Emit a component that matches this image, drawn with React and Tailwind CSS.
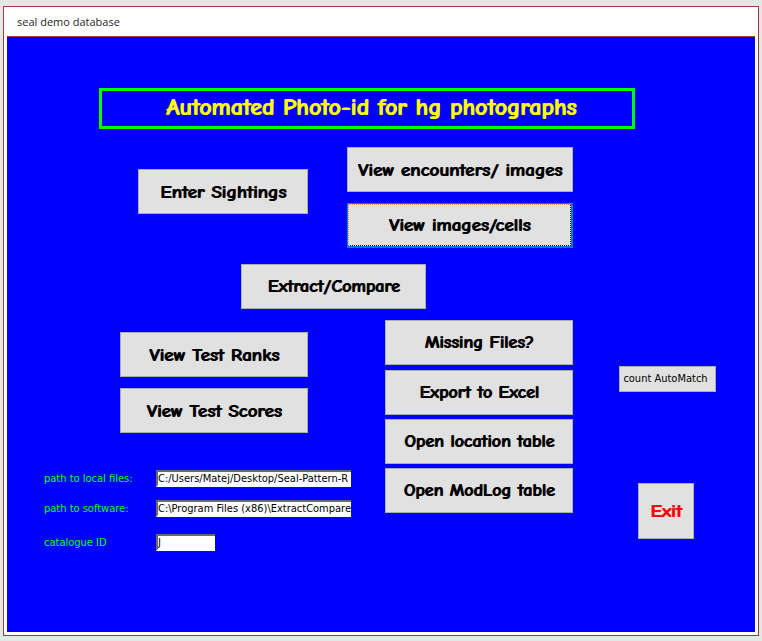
const comic = 'font-["Comic_Sans_MS","Comic_Neue",Lato,sans-serif] font-bold [text-shadow:1px_0_0_currentColor]';
const tahoma = 'font-["DejaVu_Sans_Condensed","Noto_Sans",sans-serif]';

function MenuButton({ className = '', size = 'text-[19px]', children }) {
  return (
    <button
      type="button"
      className={`h-[45px] border border-[#adadad] bg-[#e1e1e1] text-center leading-6 whitespace-nowrap text-black ${size} ${comic} ${className}`}
    >
      {children}
    </button>
  );
}

function FocusedMenuButton({ className = '', children }) {
  return (
    <button
      type="button"
      className={`h-[45px] border border-r-2 border-b-2 border-[#0078d7] bg-[#e1e1e1] text-center text-[19px] leading-6 whitespace-nowrap text-black ${comic} ${className}`}
    >
      <span className="flex size-full items-center justify-center border border-dotted border-t-[#ff8728] border-r-black border-b-black border-l-[#ff8728]">
        {children}
      </span>
    </button>
  );
}

function Field({ id, label, value, className = '', inputClass = 'w-[195px]' }) {
  return (
    <div className={`flex h-[17px] items-center ${className}`}>
      <label htmlFor={id} className="w-[112px] shrink-0 text-[11px] leading-4 whitespace-nowrap text-[#00ff00]">
        {label}
      </label>
      <input
        id={id}
        type="text"
        defaultValue={value}
        className={`h-[17px] border-2 border-r-0 border-t-[#696969] border-b-white border-l-[#696969] bg-white text-[11px] leading-3 text-black outline-none ${inputClass}`}
      />
    </div>
  );
}

export default function App() {
  return (
    <div className="flex min-h-screen flex-col bg-[#e6e6e6] px-[3px] pt-[6px] pb-[5px]">
      <div className="flex flex-1 flex-col border border-[#a4373a] bg-white px-[3px] pb-[3px]">
        <header className='flex h-[30px] items-center border-b border-[#a4373a] pl-[10px] font-["Open_Sans",sans-serif] text-[11px] leading-4 text-[#262626]'>
          seal demo database
        </header>
        <main className={`flex flex-1 flex-col items-start bg-[#0000ff] pt-[51px] pb-6 ${tahoma}`}>
          <div className="w-full pr-[120px] pl-[92px]">
            <h1 className={`flex h-[41px] items-center justify-center border-3 border-[#00ff00] pb-1 pl-2 text-[24px] leading-8 whitespace-nowrap text-[#ffff00] ${comic}`}>
              Automated Photo-id for hg photographs
            </h1>
          </div>

          <div className="mt-[18px] ml-[131px] flex items-start gap-[39px]">
            <MenuButton className="mt-[22px] w-[170px]">Enter Sightings</MenuButton>
            <div className="flex w-[226px] flex-col gap-[11px]">
              <MenuButton>View encounters/ images</MenuButton>
              <FocusedMenuButton>View images/cells</FocusedMenuButton>
            </div>
          </div>

          <MenuButton size="text-[18px]" className="mt-4 ml-[234px] w-[185px]">Extract/Compare</MenuButton>

          <div className="mt-[11px] ml-[37px] flex items-start">
            <div className="w-[307px] pt-3">
              <div className="ml-[76px] flex w-[188px] flex-col gap-[11px]">
                <MenuButton>View Test Ranks</MenuButton>
                <MenuButton>View Test Scores</MenuButton>
              </div>
              <form className="mt-[37px]">
                <Field id="local-files" label="path to local files:" value="C:/Users/Matej/Desktop/Seal-Pattern-R" />
                <Field
                  id="software"
                  label="path to software:"
                  value="C:\Program Files (x86)\ExtractCompare"
                  className="mt-[13px]"
                />
                <Field id="catalogue" label="catalogue ID" value="J" className="mt-[17px]" inputClass="w-[59px]" />
              </form>
            </div>

            <div className="ml-[34px] flex w-[188px] flex-col gap-1">
              <MenuButton size="text-[18px]" className="mb-px">Missing Files?</MenuButton>
              <MenuButton size="text-[18px]">Export to Excel</MenuButton>
              <MenuButton size="text-[18px]">Open location table</MenuButton>
              <MenuButton size="text-[18px]">Open ModLog table</MenuButton>
            </div>

            <div className="ml-[46px] flex w-[97px] flex-col items-start pt-[46px]">
              <button
                type="button"
                className="h-[26px] w-full border border-[#adadad] bg-[#e1e1e1] pr-1 text-[11px] leading-4 whitespace-nowrap text-black"
              >
                count AutoMatch
              </button>
              <button
                type="button"
                className={`mt-[91px] ml-[19px] size-14 border border-[#adadad] bg-[#e1e1e1] text-[19px] leading-6 text-[#ff0000] ${comic}`}
              >
                Exit
              </button>
            </div>
          </div>
        </main>
      </div>
    </div>
  );
}
